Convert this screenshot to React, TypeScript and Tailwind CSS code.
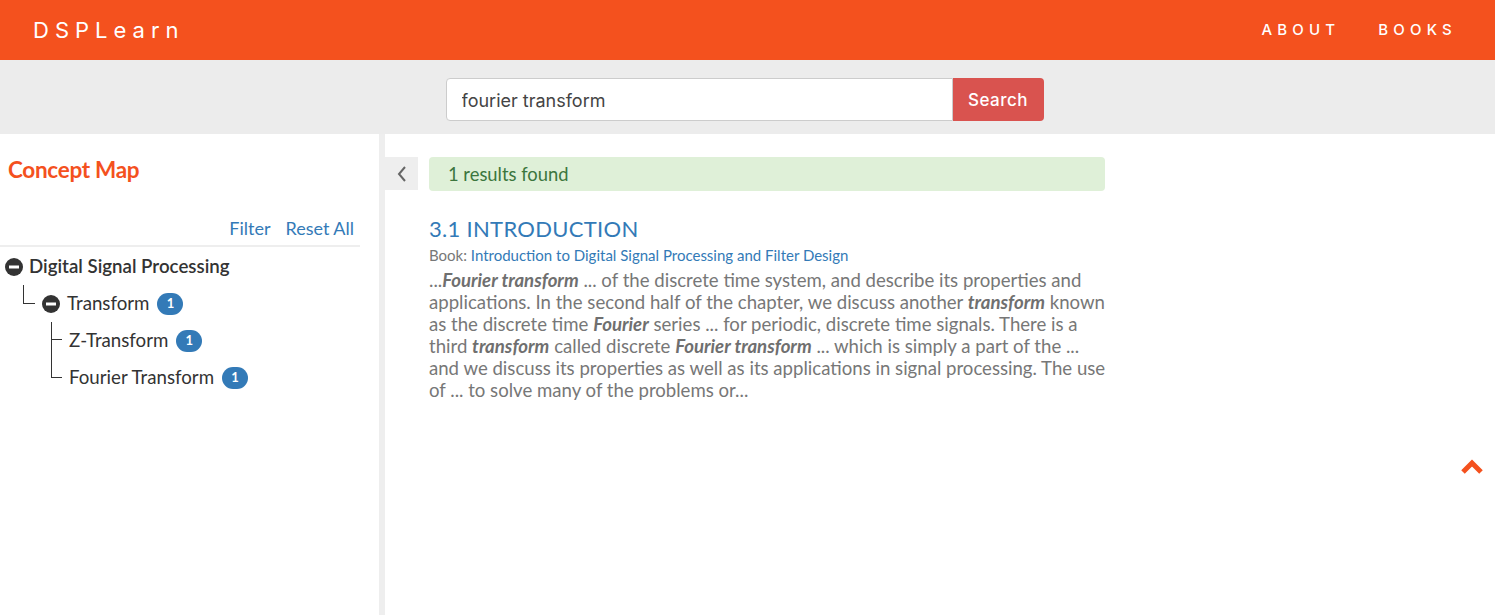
import React from "react";

const minusIcon = (
  <svg width="18" height="18" viewBox="0 0 18 18" className="shrink-0">
    <circle cx="9" cy="9" r="9" fill="#333" />
    <rect x="4" y="7.5" width="10" height="3" fill="#fff" />
  </svg>
);

function Badge({ n }: { n: number }) {
  return (
    <span className="ml-[8px] inline-flex h-[22px] min-w-[26px] items-center justify-center rounded-[11px] bg-[#337ab7] px-[7px] text-[13px] font-bold text-white">
      {n}
    </span>
  );
}

// highlighted search term in the snippet
function Hit({ children }: { children: React.ReactNode }) {
  return <b className="italic text-[#6f6f6f]">{children}</b>;
}

export default function App() {
  return (
    <div
      className="flex h-screen flex-col overflow-hidden bg-white"
      style={{ fontFamily: "Lato, 'Noto Sans', sans-serif" }}
    >
      {/* Top bar */}
      <header className="flex h-[60px] shrink-0 items-center justify-between bg-[#f4511e] pl-[33px] pr-[38px] text-white">
        <div className="font-['Inter',sans-serif] text-[22px] tracking-[6px]">DSPLearn</div>
        <nav className="flex gap-[38px] font-['Inter',sans-serif] text-[15px] font-medium tracking-[5.2px]">
          <a>ABOUT</a>
          <a>BOOKS</a>
        </nav>
      </header>

      {/* Search band */}
      <div className="flex h-[74px] shrink-0 justify-center bg-[#ececec] pt-[18px] pr-[6px]">
        <div className="flex h-[43px]">
          <input
            readOnly
            value="fourier transform"
            className="h-full w-[507px] rounded-l-[4px] border border-[#ccc] bg-white px-[15px] pt-[1px] font-['Inter',sans-serif] text-[18px] text-[#444] outline-none"
          />
          <button className="h-full w-[91px] rounded-r-[4px] bg-[#d9534f] pt-[3px] font-['Inter',sans-serif] text-[17px] font-medium tracking-[0.5px] text-white">
            Search
          </button>
        </div>
      </div>

      <div className="flex min-h-0 flex-1">
        {/* Sidebar */}
        <aside className="w-[379px] shrink-0">
          <h2 className="pl-[8px] pt-[22px] text-[22.5px] font-bold leading-[28px] tracking-[-0.3px] text-[#f4511e]">
            Concept Map
          </h2>
          <div className="mr-[19px] mt-[33px] flex justify-end gap-[15px] pr-[6px] text-[18px] leading-[22px] text-[#337ab7]">
            <a>Filter</a>
            <a>Reset All</a>
          </div>
          <div className="mr-[19px] mt-[6px] border-t-2 border-[#eee] pt-[1px]">
            <div className="flex h-[37px] items-center pl-[5px]">
              {minusIcon}
              <span className="ml-[6px] text-[18.7px] font-semibold text-[#333]">Digital Signal Processing</span>
            </div>
            <div className="flex h-[37px] items-center">
              <span className="ml-[23px] h-[19px] w-[12px] self-start border-b border-l border-[#333]" />
              <span className="ml-[7px]">{minusIcon}</span>
              <span className="ml-[7px] text-[18.7px] text-[#333]">Transform</span>
              <Badge n={1} />
            </div>
            <div className="flex h-[37px] items-center">
              <span className="ml-[51px] flex w-[11px] items-center self-stretch border-l border-[#333]">
                <span className="-mt-[2px] h-px w-full bg-[#333]" />
              </span>
              <span className="ml-[7px] text-[18.7px] text-[#333]">Z-Transform</span>
              <Badge n={1} />
            </div>
            <div className="flex h-[37px] items-center">
              <span className="ml-[51px] h-[19px] w-[11px] self-start border-b border-l border-[#333]" />
              <span className="ml-[7px] text-[18.7px] text-[#333]">Fourier Transform</span>
              <Badge n={1} />
            </div>
          </div>
        </aside>

        {/* Divider */}
        <div className="w-[6px] shrink-0 bg-[#eee]" />

        {/* Results */}
        <main className="flex flex-1 items-start pt-[23px]">
          <button className="flex h-[33px] w-[33px] items-center justify-center bg-[#eee]">
            <svg width="12" height="18" viewBox="0 0 12 18">
              <path d="M9 2 L3 9 L9 16" fill="none" stroke="#666" strokeWidth="2" />
            </svg>
          </button>
          <div className="ml-[11px] w-[676px]">
            <div className="flex h-[34px] items-center rounded-[4px] bg-[#dff0d8] pl-[19px] pt-[2px] text-[18.4px] text-[#3c763d]">
              1 results found
            </div>
            <h3 className="mt-[22px] text-[22px] leading-[32px] tracking-[0.3px] text-[#337ab7]">3.1 INTRODUCTION</h3>
            <div className="text-[15px] leading-[20px] text-[#777]">
              Book: <a className="text-[#337ab7]">Introduction to Digital Signal Processing and Filter Design</a>
            </div>
            <p className="mt-[4px] whitespace-nowrap text-[18.6px] leading-[22px] text-[#777]">
              ...<Hit>Fourier transform</Hit> ... of the discrete time system, and describe its properties and
              <br />
              applications. In the second half of the chapter, we discuss another <Hit>transform</Hit> known
              <br />
              as the discrete time <Hit>Fourier</Hit> series ... for periodic, discrete time signals. There is a
              <br />
              third <Hit>transform</Hit> called discrete <Hit>Fourier transform</Hit> ... which is simply a part of the ...
              <br />
              and we discuss its properties as well as its applications in signal processing. The use
              <br />
              of ... to solve many of the problems or...
            </p>
          </div>
          <div className="flex-1" />
        </main>
      </div>

      {/* Back to top */}
      <svg width="24" height="16" viewBox="0 0 24 16" className="fixed right-[11px] top-[459px]">
        <path d="M3 13 L12 4 L21 13" fill="none" stroke="#f4511e" strokeWidth="5" />
      </svg>
    </div>
  );
}
